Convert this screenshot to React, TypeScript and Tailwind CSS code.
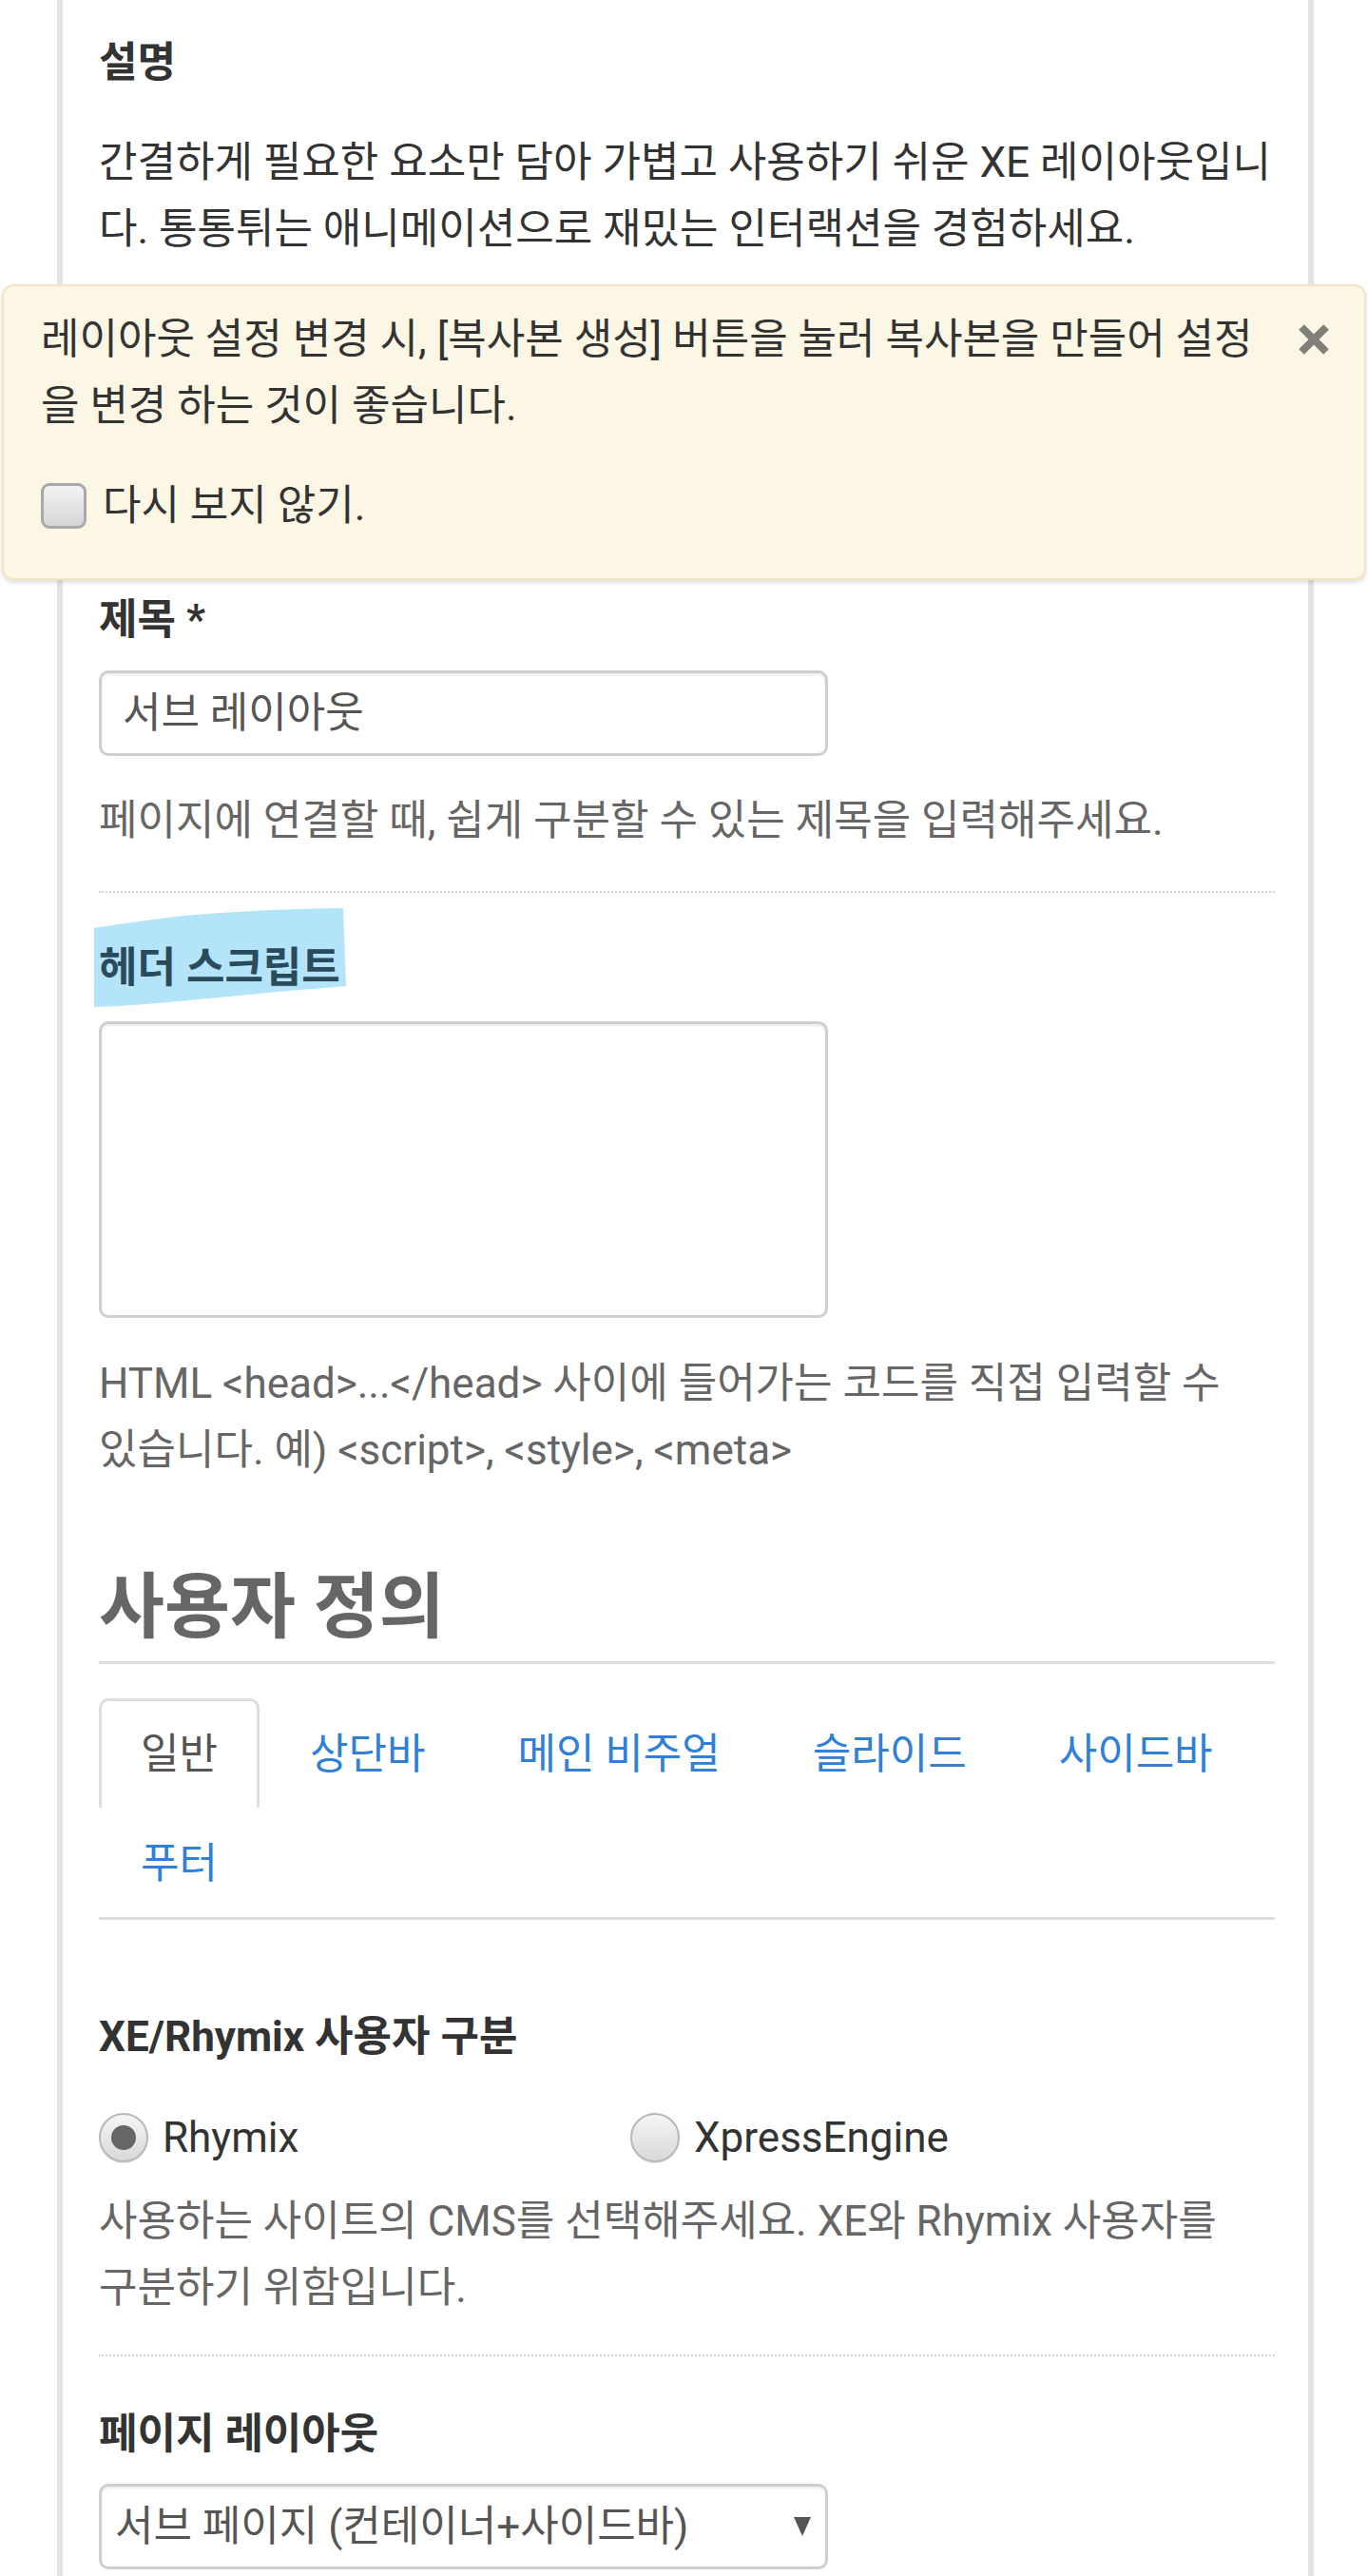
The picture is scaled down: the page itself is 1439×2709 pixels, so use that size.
import type { ReactNode } from "react";

function Line({ children }: { children: ReactNode }) {
  return <span className="block whitespace-nowrap">{children}</span>;
}

const TABS = ["일반", "상단바", "메인 비주얼", "슬라이드", "사이드바", "푸터"];

function Field({ className = "", children }: { className?: string; children?: ReactNode }) {
  return (
    <div
      className={`w-[767px] rounded-[10px] border-[3px] border-[#cfcfcf] bg-white shadow-[inset_0_2px_3px_rgba(0,0,0,0.08)] ${className}`}
    >
      {children}
    </div>
  );
}

function Dotted({ className = "" }: { className?: string }) {
  return <div className={`border-t-2 border-dotted border-[#d4d4d4] ${className}`} />;
}

function Radio({ checked, label }: { checked?: boolean; label: string }) {
  return (
    <label className="flex items-center gap-[15px]">
      <span className="flex h-[52px] w-[52px] items-center justify-center rounded-full border-2 border-[#b8b8b8] bg-linear-to-b from-[#f5f5f5] to-[#d9d9d9] shadow-[0_1px_1px_rgba(0,0,0,0.1)]">
        {checked ? <span className="h-[26px] w-[26px] rounded-full bg-[#666]" /> : null}
      </span>
      <span className="text-[#333]">{label}</span>
    </label>
  );
}

function CloseIcon() {
  return (
    <svg width="34" height="34" viewBox="0 0 34 34">
      <path d="M4 4 L30 30 M30 4 L4 30" stroke="#807f78" strokeWidth="8" />
    </svg>
  );
}

export default function App() {
  return (
    <div className="min-h-screen bg-white font-[Roboto,'Noto_Sans_CJK_KR',sans-serif] text-[44px] leading-[70px] text-[#333]">
      <div className="ml-[60px] w-[1322px] border-x-[6px] border-[#e3e3e3] bg-white pl-[38px] pr-[35px] pt-[31px] pb-[120px]">
        <h3 className="font-bold">설명</h3>
        <p className="mt-[35px]">
          <Line>간결하게 필요한 요소만 담아 가볍고 사용하기 쉬운 XE 레이아웃입니</Line>
          <Line>다. 통통튀는 애니메이션으로 재밌는 인터랙션을 경험하세요.</Line>
        </p>

        {/* notice bar breaks out of the card */}
        <div className="-ml-[102px] -mr-[96px] mt-[23px] rounded-[12px] border-2 border-[#f4e4c4] bg-[#fcf6e4] pl-[39px] pr-[36px] pt-[21px] pb-[41px] shadow-[0_3px_4px_rgba(0,0,0,0.12)]">
          <div className="flex items-start justify-between">
            <p>
              <Line>레이아웃 설정 변경 시, [복사본 생성] 버튼을 눌러 복사본을 만들어 설정</Line>
              <Line>을 변경 하는 것이 좋습니다.</Line>
            </p>
            <button className="flex h-[70px] items-center">
              <CloseIcon />
            </button>
          </div>
          <label className="mt-[35px] flex items-center gap-[17px]">
            <span className="h-[48px] w-[48px] rounded-[9px] border-[3px] border-[#a8a8a8] bg-linear-to-b from-[#f2f2f2] to-[#d6d6d6]" />
            <span>다시 보지 않기.</span>
          </label>
        </div>

        <h3 className="mt-[7px] font-bold">제목 *</h3>
        <Field className="mt-[18px] flex h-[90px] items-center pl-[22px] text-[#555]">서브 레이아웃</Field>
        <p className="mt-[33px] text-[#666]">
          <Line>페이지에 연결할 때, 쉽게 구분할 수 있는 제목을 입력해주세요.</Line>
        </p>

        <Dotted className="mt-[39px] w-[1237px]" />

        <h3 className="relative mt-[44px] inline-block font-bold text-[#2a4b5b]">
          <svg
            className="absolute -left-[5px] -top-[28px]"
            width="268"
            height="106"
            viewBox="0 0 268 106"
          >
            <path
              d="M0 21 C30 16 60 12 95 8 C150 3 200 1 262 0 L265 82 C215 86 160 91 110 96 C60 101 30 103 0 104 Z"
              fill="#b3e4fa"
            />
          </svg>
          <span className="relative">헤더 스크립트</span>
        </h3>
        <Field className="mt-[21px] h-[312px]" />
        <p className="mt-[34px] text-[#666]">
          <Line>HTML {"<head>...</head>"} 사이에 들어가는 코드를 직접 입력할 수</Line>
          <Line>있습니다. 예) {"<script>, <style>, <meta>"}</Line>
        </p>

        <h2 className="mt-[89px] border-b-[3px] border-[#dedede] pb-[16px] text-[75px] font-bold leading-[82px] text-[#666]">
          사용자 정의
        </h2>

        <ul className="mt-[36px] flex flex-wrap border-b-[3px] border-[#dedede]">
          {TABS.map((t, i) => (
            <li key={t} className="mr-[9px]">
              <a
                className={`flex h-[115px] items-center rounded-t-[10px] border-[3px] border-b-0 px-[41px] ${
                  i === 0 ? "border-[#dedede] bg-white text-[#555]" : "border-transparent text-[#2f80d6]"
                }`}
              >
                {t}
              </a>
            </li>
          ))}
        </ul>

        <h3 className="mt-[88px] font-bold">XE/Rhymix 사용자 구분</h3>
        <div className="mt-[36px] flex h-[70px] items-center">
          <div className="w-[559px]">
            <Radio checked label="Rhymix" />
          </div>
          <Radio label="XpressEngine" />
        </div>
        <p className="mt-[18px] text-[#666]">
          <Line>사용하는 사이트의 CMS를 선택해주세요. XE와 Rhymix 사용자를</Line>
          <Line>구분하기 위함입니다.</Line>
        </p>

        <Dotted className="mt-[35px] w-[1237px]" />

        <h3 className="mt-[47px] font-bold">페이지 레이아웃</h3>
        <Field className="mt-[17px] flex h-[90px] items-center justify-between pl-[14px] pr-[14px] text-[#555]">
          <span>서브 페이지 (컨테이너+사이드바)</span>
          <svg width="20" height="22" viewBox="0 0 20 22">
            <path d="M1 1 L19 1 L10 21 Z" fill="#555" />
          </svg>
        </Field>
      </div>
    </div>
  );
}
